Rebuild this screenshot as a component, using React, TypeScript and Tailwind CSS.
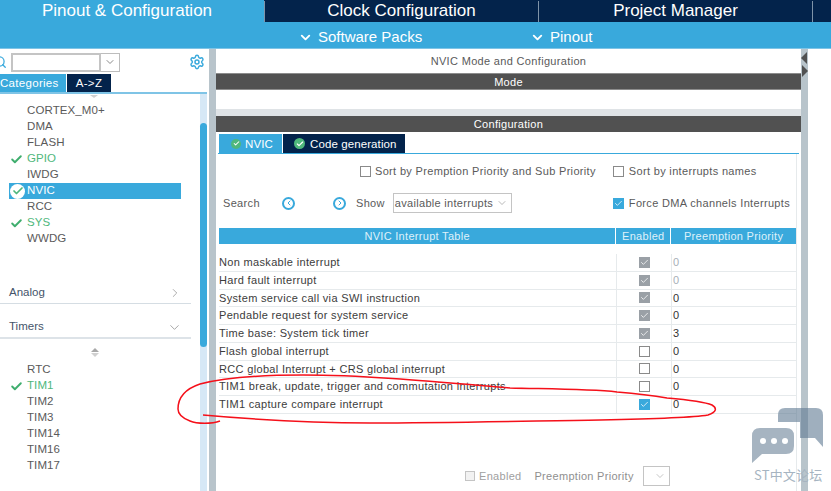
import { Check, ChevronDown, ChevronLeft, ChevronRight, Search, Settings } from "lucide-react";

const group1 = [
  { name: "CORTEX_M0+" },
  { name: "DMA" },
  { name: "FLASH" },
  { name: "GPIO", ok: true },
  { name: "IWDG" },
  { name: "NVIC", selected: true },
  { name: "RCC" },
  { name: "SYS", ok: true },
  { name: "WWDG" },
];

const group2 = [
  { name: "RTC" },
  { name: "TIM1", ok: true },
  { name: "TIM2" },
  { name: "TIM3" },
  { name: "TIM14" },
  { name: "TIM16" },
  { name: "TIM17" },
];

const rows = [
  { name: "Non maskable interrupt", state: "locked", prio: "0", faded: true },
  { name: "Hard fault interrupt", state: "locked", prio: "0", faded: true },
  { name: "System service call via SWI instruction", state: "locked", prio: "0" },
  { name: "Pendable request for system service", state: "locked", prio: "0" },
  { name: "Time base: System tick timer", state: "locked", prio: "3" },
  { name: "Flash global interrupt", state: "off", prio: "0" },
  { name: "RCC global Interrupt + CRS global interrupt", state: "off", prio: "0" },
  { name: "TIM1 break, update, trigger and commutation interrupts", state: "off", prio: "0" },
  { name: "TIM1 capture compare interrupt", state: "on", prio: "0" },
];

function Box({ state }: { state: string }) {
  if (state === "off") return <span className="block h-[11px] w-[11px] border border-[#8a8a8a] bg-white" />;
  return (
    <span className={"flex h-[11px] w-[11px] items-center justify-center " + (state === "on" ? "bg-[#39a9dc]" : "bg-[#9aa0a6]")}>
      <Check size={9} strokeWidth={2} className="text-white" />
    </span>
  );
}

function OkDot({ size = 11 }: { size?: number }) {
  return (
    <span className="flex items-center justify-center rounded-full bg-[#4fb77c]" style={{ width: size, height: size }}>
      <Check size={size - 3} strokeWidth={3.5} className="text-white" />
    </span>
  );
}

function SideItem({ name, ok, selected }: { name: string; ok?: boolean; selected?: boolean }) {
  return (
    <div className={"flex h-4 w-[172px] items-center text-[11.5px] tracking-[0.1px] " + (selected ? "bg-[#39a9dc] text-white" : ok ? "text-[#4fb77c]" : "text-[#5a5a5a]")}>
      <span className="flex w-[18px] justify-center pr-[1px]">
        {selected ? (
          <span className="flex h-[15px] w-[15px] items-center justify-center rounded-full bg-white">
            <Check size={12} strokeWidth={3.5} className="text-[#4fb77c]" />
          </span>
        ) : ok ? (
          <Check size={13} strokeWidth={3.5} className="mr-[2px] text-[#3fae6e]" />
        ) : null}
      </span>
      {name}
    </div>
  );
}

export default function App() {
  return (
    <div className="relative flex h-[491px] w-[831px] flex-col overflow-hidden bg-white font-['Liberation_Sans',sans-serif]">
      {/* top tabs */}
      <div className="flex h-[22px] bg-[#03234b] pt-[1px] text-[17px] leading-[20px]">
        <div className="-mt-[1px] w-[264px] bg-[#39a9dc] pr-[10px] pt-[1px] text-center text-white">Pinout &amp; Configuration</div>
        <div className="w-[274px] border-l border-[#7f93a8] text-center text-white">Clock Configuration</div>
        <div className="w-[275px] border-x border-[#7f93a8] text-center text-white">Project Manager</div>
      </div>
      <div className="flex h-[26px] items-center bg-[#39a9dc] pt-[4px] text-[15px] text-white">
        <div className="ml-[298px] flex w-[232px] items-center gap-[5px]">
          <ChevronDown size={15} strokeWidth={3} />
          Software Packs
        </div>
        <div className="flex items-center gap-[5px]">
          <ChevronDown size={15} strokeWidth={3} />
          Pinout
        </div>
      </div>
      <div className="h-px bg-[#7fc4e6]" />

      <div className="flex flex-1">
        {/* left panel */}
        <div className="flex w-[209px] flex-col">
          <div className="flex h-[25px] items-center pt-[1px]">
            <div className="w-[11px] overflow-hidden">
              <Search size={14} strokeWidth={2.2} className="-ml-[7px] text-[#39a9dc]" />
            </div>
            <div className="h-[19px] w-[90px] border-2 border-[#c4c4c4] bg-white" />
            <div className="flex h-[19px] w-[19px] items-center justify-center border border-l-0 border-[#bdbdbd]">
              <ChevronDown size={12} className="text-[#8a8a8a]" />
            </div>
            <Settings size={16} strokeWidth={2.2} className="ml-[69px] text-[#39a9dc]" />
          </div>
          <div className="flex h-[18px] text-[11.5px] leading-[18px] tracking-[0.3px] text-white">
            <div className="w-[66px] bg-[#39a9dc]">Categories</div>
            <div className="ml-px w-[44px] bg-[#03234b] text-center">A-&gt;Z</div>
          </div>
          <div className="h-[2px] w-[207px] bg-[#7fc4e6]" />
          <div className="flex flex-1">
            <div className="w-[200px]">
              <div className="flex h-[9px] justify-center pr-[12px]">
                <span className="mt-[1px] h-0 w-0 border-x-[4px] border-t-[3px] border-x-transparent border-t-[#d0d0d0]" />
              </div>
              <div className="ml-[9px] flex flex-col">
                {group1.map((item) => (
                  <SideItem key={item.name} {...item} />
                ))}
              </div>
              <div className="mt-[37px] flex h-[20px] w-[191px] items-center justify-between border-b border-[#d5dde3] pb-[2px] pl-[9px] pr-[9px] text-[11.5px] text-[#44546a]">
                Analog
                <ChevronRight size={14} strokeWidth={1.2} className="text-[#8a8a8a]" />
              </div>
              <div className="mt-[15px] flex h-[20px] w-[191px] items-center justify-between border-b-2 border-[#dde3e8] pb-[2px] pl-[9px] pr-[9px] text-[11.5px] text-[#44546a]">
                Timers
                <ChevronDown size={15} strokeWidth={1.2} className="text-[#8a8a8a]" />
              </div>
              <div className="mt-[9px] flex h-[12px] flex-col items-center gap-[1px] pr-[11px]">
                <span className="h-0 w-0 border-x-[4px] border-b-[4px] border-x-transparent border-b-[#a8a8a8]" />
                <span className="h-0 w-0 border-x-[4px] border-t-[4px] border-x-transparent border-t-[#d0d0d0]" />
              </div>
              <div className="ml-[9px] mt-[2px] flex flex-col">
                {group2.map((item) => (
                  <SideItem key={item.name} {...item} />
                ))}
              </div>
            </div>
            <div className="w-[7px] bg-[#d6e8f6] pt-[29px]">
              <div className="h-[224px] rounded-[4px] bg-[#39a9dc]" />
            </div>
          </div>
        </div>

        {/* splitter */}
        <div className="w-[7px] bg-[#b8c4cb]" />

        {/* main panel */}
        <div className="flex w-[585px] flex-col text-[#5a5a5a]">
          <div className="flex h-[24px] items-center justify-center pt-[1px] text-[11px] tracking-[0.33px]">NVIC Mode and Configuration</div>
          <div className="h-[17px] border-y border-[#8c8c8c] bg-[#515151] text-center text-[11px] leading-[16px] tracking-[0.3px] text-white">Mode</div>
          <div className="h-[19px]" />
          <div className="h-[7px] bg-[#dfe3e6]" />
          <div className="h-[16px] bg-[#515151] text-center text-[11px] leading-[16px] tracking-[0.3px] text-white">Configuration</div>
          <div className="mx-[3px] mt-[2px] flex h-[19px] text-[11.5px] leading-[18px] tracking-[0.1px] text-white">
            <div className="flex w-[63px] items-center gap-[4px] bg-[#39a9dc] pl-[12px]">
              <OkDot size={10} />
              NVIC
            </div>
            <div className="ml-px flex w-[122px] items-center gap-[5px] bg-[#03234b] pl-[11px]">
              <OkDot size={11} />
              Code generation
            </div>
          </div>
          <div className="ml-[2px] mr-[2px] h-px bg-[#39a9dc]" />

          <div className="ml-[3px] mr-[4px] flex-1 border-r border-[#e6eaec]">
            {/* sort row */}
            <div className="flex h-[34px] items-center pt-[1px] text-[11px] tracking-[0.33px]">
              <span className="ml-[141px] mr-[4px]"><Box state="off" /></span>
              Sort by Premption Priority and Sub Priority
              <span className="ml-[17px] mr-[5px]"><Box state="off" /></span>
              Sort by interrupts names
            </div>
            {/* search row */}
            <div className="flex h-[30px] items-center text-[11px] tracking-[0.33px]">
              <span className="ml-[4px] w-[59px]">Search</span>
              <span className="flex h-[13px] w-[13px] items-center justify-center rounded-full border-2 border-[#39a9dc]">
                <ChevronLeft size={8} strokeWidth={3} className="text-[#39a9dc]" />
              </span>
              <span className="ml-[38px] flex h-[13px] w-[13px] items-center justify-center rounded-full border-2 border-[#39a9dc]">
                <ChevronRight size={8} strokeWidth={3} className="text-[#39a9dc]" />
              </span>
              <span className="ml-[10px]">Show</span>
              <span className="ml-[8px] flex h-[20px] w-[119px] items-center justify-between whitespace-nowrap border border-[#c4c4c4] pl-[1px] pr-[3px] tracking-[0.3px]">
                available interrupts
                <ChevronDown size={12} strokeWidth={1.2} className="shrink-0 text-[#8a8a8a]" />
              </span>
              <span className="ml-[101px] mr-[5px]"><Box state="on" /></span>
              Force DMA channels Interrupts
            </div>
            {/* table */}
            <div className="mt-[10px] flex h-[16px] text-[11px] leading-[16px] tracking-[0.3px] text-[#dff1fa]">
              <div className="w-[397px] bg-[#39a9dc] text-center">NVIC Interrupt Table</div>
              <div className="ml-px w-[54px] bg-[#39a9dc] text-center">Enabled</div>
              <div className="ml-px w-[125px] bg-[#39a9dc] text-center">Preemption Priority</div>
            </div>
            <div className="mt-[10px]">
              {rows.map((row) => (
                <div key={row.name} className="flex h-[17.75px] w-[578px] items-center border-b border-[#e6eaec] text-[11px] tracking-[0.33px] text-[#3c3c3c]">
                  <div className="w-[397px] whitespace-nowrap">{row.name}</div>
                  <div className="flex h-full w-[56px] items-center justify-center border-x border-[#e6eaec]"><Box state={row.state} /></div>
                  <div className={"pl-[1px] " + (row.faded ? "text-[#a8b0b8]" : "text-[#333333]")}>{row.prio}</div>
                </div>
              ))}
            </div>
            {/* bottom controls */}
            <div className="ml-[246px] mt-[51px] flex h-[22px] items-center text-[11px] tracking-[0.3px] text-[#a0a0a0]">
              <span className="mr-[4px] h-[10px] w-[10px] border border-[#c4c4c4] bg-[#f2f2f2]" />
              Enabled
              <span className="ml-[13px] text-[#8f8f8f]">Preemption Priority</span>
              <span className="ml-[9px] flex h-[20px] w-[27px] items-center justify-end border border-[#c4c4c4] pr-[3px]">
                <ChevronDown size={12} strokeWidth={1.2} className="text-[#a0a0a0]" />
              </span>
            </div>
          </div>
        </div>

        {/* right splitter */}
        <div className="relative w-[7px] bg-[#b8c4cb]">
          <span className="absolute left-0 top-[3px] h-0 w-0 border-y-[6px] border-r-[6px] border-y-transparent border-r-[#515151]" />
          <span className="absolute left-[1px] top-[16px] h-0 w-0 border-y-[6px] border-l-[6px] border-y-transparent border-l-[#515151]" />
        </div>
      </div>

      {/* hand drawn red mark over the table */}
      <svg className="pointer-events-none absolute left-0 top-0" width="831" height="491" fill="none">
        <path
          d="M220 421 C212 424 197 424 190 421 C182 418 178 414 178 409 C178 398 185 389 200 384 C230 376 270 375 303 375 C370 375 450 383 510 388 C550 389 590 389 617 392 C640 394 655 396 667 398 C690 400 705 402 712 405 C717 408 717 412 708 415 C690 418 650 419 600 420 C530 421 450 423 370 423 C320 423 270 421 203 415"
          stroke="#f5101a"
          strokeWidth="1.5"
        />
      </svg>

      {/* forum watermark */}
      <svg className="pointer-events-none absolute left-[752px] top-[407px]" width="72" height="56">
        <path d="M26 15 V8 Q26 1 33 1 H64 Q71 1 71 8 V40 L63 31 H48 V15 Z" fill="#5f7a93" fillOpacity="0.6" />
        <path d="M8 21 H34 Q42 21 42 29 V39 Q42 47 34 47 H10 L0 56 V29 Q0 21 8 21 Z" fill="#a6b4c1" />
        <circle cx="11" cy="34" r="3" fill="#ffffff" />
        <circle cx="22" cy="34" r="3" fill="#ffffff" />
        <circle cx="33" cy="34" r="3" fill="#ffffff" />
      </svg>
      <div className="absolute left-[754px] top-[467px] font-['Noto_Sans_CJK_SC','Liberation_Sans',sans-serif] text-[13px] leading-[16px] tracking-[0.2px] text-[#a6b4c1]">ST中文论坛</div>
    </div>
  );
}
